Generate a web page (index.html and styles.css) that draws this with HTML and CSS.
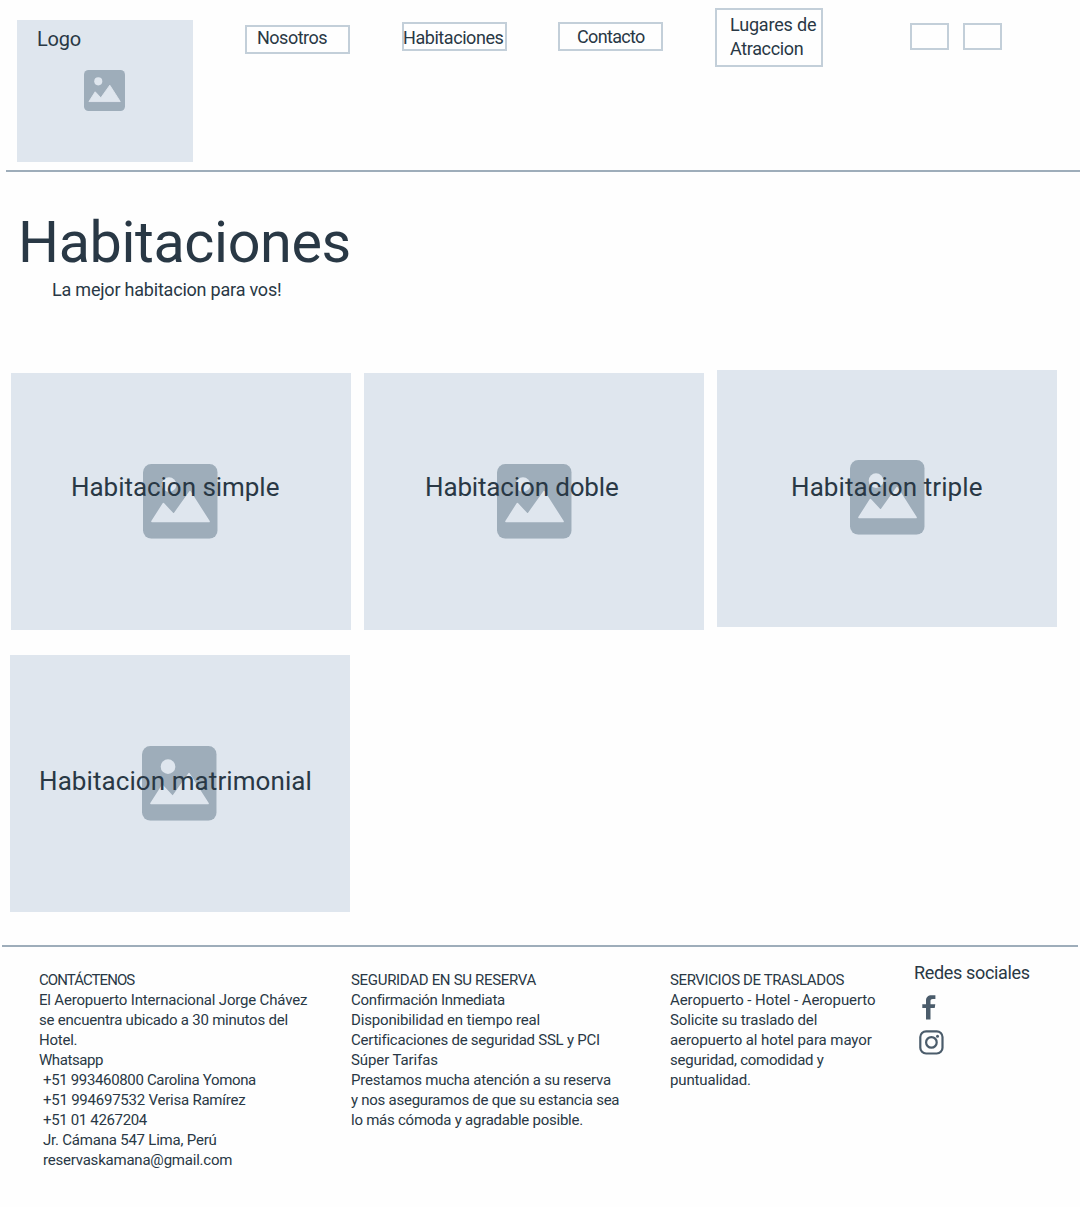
FILE: index.html
```html
<!DOCTYPE html>
<html lang="es">
<head>
<meta charset="utf-8">
<title>Habitaciones</title>
<link rel="stylesheet" href="styles.css">
</head>
<body>
<svg width="0" height="0" class="sprite" aria-hidden="true">
  <symbol id="picture" viewBox="0 0 224 224">
    <rect class="picture-frame" width="224" height="224" rx="25"/>
    <circle class="picture-hole" cx="78" cy="62" r="22"/>
    <path class="picture-hole" d="M27 172.5 61 119 92 152 141 83 198 172.5Z"/>
  </symbol>
</svg>

<header class="header">
  <div class="logo">
    <span class="logo-text">Logo</span>
    <svg class="logo-icon"><use href="#picture"/></svg>
  </div>
  <nav class="nav">
    <a class="nav-item nav-about">Nosotros</a>
    <a class="nav-item nav-rooms"><span>Habitaciones</span></a>
    <a class="nav-item nav-contact">Contacto</a>
    <a class="nav-item nav-places"><span class="places-a">Lugares de</span><span class="places-b">Atraccion</span></a>
    <a class="nav-item nav-small"></a>
    <a class="nav-item nav-small nav-last"></a>
  </nav>
</header>

<main>
  <section class="intro">
    <h1 class="title">Habitaciones</h1>
    <p class="subtitle">La mejor habitacion para vos!</p>
  </section>
  <section class="rooms">
    <article class="room simple"><svg class="room-icon"><use href="#picture"/></svg><h2 class="room-name">Habitacion simple</h2></article>
    <article class="room doble"><svg class="room-icon"><use href="#picture"/></svg><h2 class="room-name">Habitacion doble</h2></article>
    <article class="room triple"><svg class="room-icon"><use href="#picture"/></svg><h2 class="room-name">Habitacion triple</h2></article>
    <article class="room matrimonial"><svg class="room-icon"><use href="#picture"/></svg><h2 class="room-name">Habitacion matrimonial</h2></article>
  </section>
</main>

<footer class="footer">
  <div class="col col-contact">
    <p class="t94">CONTÁCTENOS</p>
    <p class="t18">El Aeropuerto Internacional Jorge Chávez</p>
    <p class="t23">se encuentra ubicado a 30 minutos del</p>
    <p class="t24">Hotel.</p>
    <p class="t44">Whatsapp</p>
    <p class="indent t33">+51 993460800 Carolina Yomona</p>
    <p class="indent t23">+51 994697532 Verisa Ramírez</p>
    <p class="indent t33">+51 01 4267204</p>
    <p class="indent t21">Jr. Cámana 547 Lima, Perú</p>
    <p class="indent t21">reservaskamana@gmail.com</p>
  </div>
  <div class="col col-security">
    <p class="t31">SEGURIDAD EN SU RESERVA</p>
    <p class="t31">Confirmación Inmediata</p>
    <p class="t15">Disponibilidad en tiempo real</p>
    <p class="t24">Certificaciones de seguridad SSL y PCI</p>
    <p class="t9">Súper Tarifas</p>
    <p class="t21">Prestamos mucha atención a su reserva</p>
    <p class="t26">y nos aseguramos de que su estancia sea</p>
    <p class="t24">lo más cómoda y agradable posible.</p>
  </div>
  <div class="col col-transfer">
    <p class="t39">SERVICIOS DE TRASLADOS</p>
    <p class="t9">Aeropuerto - Hotel - Aeropuerto</p>
    <p class="t15">Solicite su traslado del</p>
    <p class="t9">aeropuerto al hotel para mayor</p>
    <p class="t24">seguridad, comodidad y</p>
    <p class="t15">puntualidad.</p>
  </div>
  <div class="social">
    <p class="social-title">Redes sociales</p>
    <svg class="facebook" viewBox="0 0 14 25"><path d="M4 24.5V13H.3V9.2H4V5.8C4 2 6 .2 9.6.2h3.8V4h-2.6C9.1 4 8.500 4.700 8.500 6.100v3.100h4.800l-.6 3.800H8.500v11.500Z"/></svg>
    <svg class="instagram" viewBox="0 0 25 25"><rect x="1.300" y="1.300" width="22.200" height="22.200" rx="5.800"/><circle cx="12.400" cy="12.400" r="5.300"/><circle class="dot" cx="18.500" cy="6.300" r="1.500"/></svg>
  </div>
</footer>
</body>
</html>
```
FILE: styles.css
```css
* { box-sizing: border-box; }

body {
  margin: 0;
  background: #fefefe;
  color: #293845;
  font-family: Roboto, sans-serif;
  font-size: 18px;
  line-height: 24px;
}

h1, h2, p { margin: 0; font-weight: 400; }
svg { display: block; }
.sprite { position: absolute; }

.picture-frame { fill: #9eadba; }
.picture-hole { fill: #dfe6ee; }
path.picture-hole { stroke: #dfe6ee; stroke-width: 5; stroke-linejoin: round; }

/* Header */
.header {
  display: flex;
  align-items: flex-start;
  height: 172px;
  margin-left: 6px;
  padding-left: 11px;
  border-bottom: 2px solid #9eadba;
}

.logo {
  width: 176px;
  height: 142px;
  margin-top: 20px;
  padding: 7px 0 0 20px;
  background: #dfe6ee;
}
.logo-text { display: block; font-size: 20px; letter-spacing: -0.236px; }
.logo-icon { width: 41px; height: 41px; margin: 19px 0 0 47px; }

.nav { display: flex; align-items: flex-start; margin-left: 52px; }
.nav-item {
  width: 105px;
  height: 29px;
  border: 2px solid #c3cfd9;
  line-height: 22px;
  white-space: nowrap;
}
.nav-about { margin-top: 25px; padding-left: 10px; letter-spacing: -0.5px; }
.nav-rooms { margin: 22px 0 0 52px; padding-top: 3px; letter-spacing: -0.44px; }
.nav-rooms span { display: block; margin-left: -1px; }
.nav-contact { margin: 22px 0 0 51px; padding: 2px 0 0 17px; letter-spacing: -0.66px; }
.nav-places {
  display: flex;
  flex-direction: column;
  width: 108px;
  height: 59px;
  margin: 8px 0 0 52px;
  padding: 3px 0 0 13px;
  line-height: 24px;
}
.places-a { letter-spacing: -0.168px; }
.places-b { letter-spacing: -0.36px; }
.nav-small { width: 39px; height: 27px; margin: 23px 0 0 87px; }
.nav-last { margin-left: 14px; }

/* Page heading */
.intro { height: 198px; padding: 36px 0 0 18px; }
.title { font-size: 57.5px; line-height: 70px; letter-spacing: -0.38px; }
.subtitle { margin-left: 34px; letter-spacing: -0.207px; }

/* Room cards */
.rooms {
  display: grid;
  grid-template-columns: repeat(3, 340px);
  grid-template-rows: repeat(2, 257px);
  gap: 28px 13px;
  padding-left: 11px;
}
.room { position: relative; padding: 91px 0 0 132.2px; background: #dfe6ee; }
.room-icon { width: 74.7px; height: 74.7px; }
.room-name { position: absolute; font-size: 26px; line-height: 32px; white-space: nowrap; }
.simple, .doble { margin: 3px 0 -3px; }
.doble { padding-left: 133px; }
.triple { padding: 90px 0 0 133px; }
.matrimonial { margin-left: -1px; margin-right: 1px; }
.simple .room-name { top: 98px; left: 60px; letter-spacing: -0.04px; }
.doble .room-name { top: 98px; left: 61px; letter-spacing: -0.15px; }
.triple .room-name { top: 101px; left: 74px; letter-spacing: 0.08px; }
.matrimonial .room-name { top: 110px; left: 29px; letter-spacing: 0.08px; }

/* Footer */
.footer {
  display: flex;
  align-items: flex-start;
  width: 1076px;
  height: 262px;
  margin: 33px 0 0 2px;
  padding-left: 37px;
  border-top: 2px solid #9eadba;
}
.col { margin-top: 23px; font-size: 15px; line-height: 20px; white-space: nowrap; }
.col-contact { width: 312px; }
.col-security { width: 319px; }
.col-transfer { width: 244px; }
.indent { padding-left: 4px; }

/* Tracking steps for the footer lines */
.t9 { letter-spacing: -0.09px; }
.t15 { letter-spacing: -0.15px; }
.t18 { letter-spacing: -0.18px; }
.t21 { letter-spacing: -0.215px; }
.t23 { letter-spacing: -0.23px; }
.t24 { letter-spacing: -0.245px; }
.t26 { letter-spacing: -0.26px; }
.t31 { letter-spacing: -0.31px; }
.t33 { letter-spacing: -0.34px; }
.t39 { letter-spacing: -0.39px; }
.t44 { letter-spacing: -0.44px; }
.t94 { letter-spacing: -0.94px; }

.social { padding-top: 14px; }
.social-title { letter-spacing: -0.34px; }
.facebook { width: 14px; height: 25px; margin: 10px 0 0 8px; fill: #4b5c6b; }
.instagram { width: 25px; height: 25px; margin: 10px 0 0 5px; fill: none; stroke: #4b5c6b; stroke-width: 2.2; }
.instagram .dot { fill: #4b5c6b; stroke: none; }
```
